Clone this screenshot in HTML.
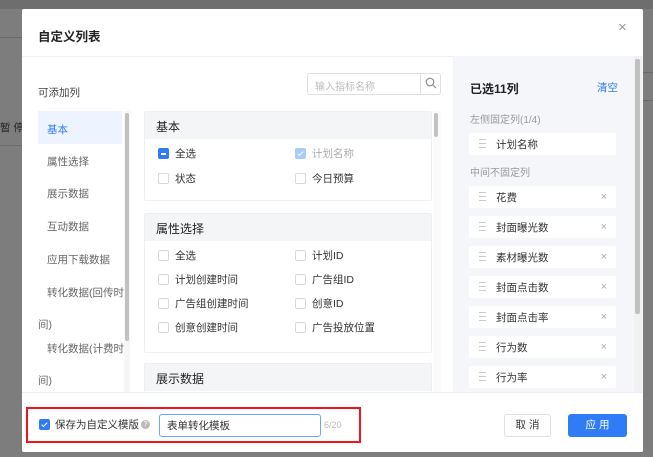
<!DOCTYPE html>
<html><head><meta charset="utf-8"><style>
*{box-sizing:border-box;margin:0;padding:0}
body{width:653px;height:457px;overflow:hidden;background:#7d7d7d;font-family:"Liberation Sans","Noto Sans CJK SC",sans-serif;position:relative;font-size:11px;color:#333}
.a{position:absolute;white-space:nowrap}
.modal{position:absolute;left:22px;top:9px;width:621px;height:443px;background:#fff;border-radius:2px;overflow:hidden}
.cb{position:absolute;width:11px;height:11px;border:1px solid #d6d9de;border-radius:2px;background:#fff}
.lab{position:absolute;font-size:10.5px;color:#333}
.sec{position:absolute;left:122px;width:288px;border:1px solid #eceef1;border-radius:2px;background:#fff}
.sh{height:27px;background:#f4f5f7;font-size:12px;color:#222;padding:6px 11px}
.row{position:absolute;left:447px;width:147px;height:22px;background:#fff;border-radius:2px}
.row .h{position:absolute;left:10px;top:6px;width:7px;height:9px;border-top:1px solid #ccc;border-bottom:1px solid #ccc}
.row .h:after{content:"";position:absolute;left:0;top:3px;width:7px;border-top:1px solid #ccc}
.row .t{position:absolute;left:27px;top:4px;font-size:10.5px;color:#333}
.row .x{position:absolute;right:9px;top:5px;font-size:11px;line-height:12px;color:#aaa}
.nav{position:absolute;left:25px;font-size:10.5px;color:#666}
</style></head><body>
<div class="a" style="left:0;top:0;width:653px;height:9px;background:#6e6e6e"></div>
<div class="a" style="left:0;top:37px;width:22px;border-top:1px solid #6a6a6a"></div>
<div class="a" style="left:0;top:120px;font-size:10.5px;color:#222">暂 停</div>
<div class="a" style="left:0;top:145px;width:22px;border-top:1px solid #6a6a6a"></div>
<div class="a" style="left:643px;top:72px;width:10px;border-top:1px solid #6a6a6a"></div>
<div class="a" style="left:643px;top:100px;width:10px;border-top:1px solid #6a6a6a"></div>

<div class="modal">
 <div class="a" style="left:16px;top:17px;font-size:12.5px;color:#222;font-weight:bold">自定义列表</div>
 <div class="a" style="left:596px;top:10px;font-size:15px;color:#999">×</div>
 <div class="a" style="left:0;top:47px;width:621px;border-top:1px solid #eef0f2"></div>

 <div class="a" style="left:16px;top:76px;font-size:10.5px;color:#444">可添加列</div>
 <div class="a" style="left:285px;top:64px;width:134px;height:22px;border:1px solid #dcdfe4;border-radius:3px"></div>
 <div class="a" style="left:293px;top:69px;font-size:10px;color:#bbb">输入指标名称</div>
 <div class="a" style="left:398px;top:64px;width:1px;height:22px;background:#dcdfe4"></div>
 <svg class="a" style="left:403px;top:68px" width="12" height="12" viewBox="0 0 12 12"><circle cx="5" cy="5" r="3.8" fill="none" stroke="#888" stroke-width="1.1"/><path d="M8 8l3 3" stroke="#888" stroke-width="1.1"/></svg>

 <div class="a" style="left:16px;top:102px;width:84px;height:33px;background:#edf4ff"></div>
 <div class="nav" style="top:113px;color:#2f7cf6">基本</div>
 <div class="nav" style="top:145px">属性选择</div>
 <div class="nav" style="top:177px">展示数据</div>
 <div class="nav" style="top:210px">互动数据</div>
 <div class="nav" style="top:243px">应用下载数据</div>
 <div class="nav" style="top:276px">转化数据(回传时</div>
 <div class="nav" style="top:308px;left:16px">间)</div>
 <div class="nav" style="top:332px">转化数据(计费时</div>
 <div class="nav" style="top:364px;left:16px">间)</div>
 <div class="a" style="left:102px;top:102px;width:6px;height:290px;background:#f6f6f6"></div>
 <div class="a" style="left:103px;top:104px;width:4px;height:228px;background:#c1c1c1;border-radius:2px"></div>

 <div class="sec" style="top:102px;height:90px"><div class="sh">基本</div></div>
 <div class="cb" style="left:136px;top:139px;background:#2f7cf6;border-color:#2f7cf6"><div style="position:absolute;left:2px;top:4px;width:5px;height:1.5px;background:#fff"></div></div>
 <div class="lab" style="left:153px;top:137px">全选</div>
 <div class="cb" style="left:273px;top:139px;background:#a9cbf7;border-color:#a9cbf7"><div style="position:absolute;left:3px;top:1px;width:3px;height:6px;border:solid #fff;border-width:0 1.5px 1.5px 0;transform:rotate(45deg)"></div></div>
 <div class="lab" style="left:290px;top:137px;color:#aaa">计划名称</div>
 <div class="cb" style="left:136px;top:164px"></div><div class="lab" style="left:153px;top:162px">状态</div>
 <div class="cb" style="left:273px;top:164px"></div><div class="lab" style="left:290px;top:162px">今日预算</div>

 <div class="sec" style="top:204px;height:140px"><div class="sh">属性选择</div></div>
 <div class="cb" style="left:136px;top:241px"></div><div class="lab" style="left:153px;top:239px">全选</div>
 <div class="cb" style="left:273px;top:241px"></div><div class="lab" style="left:290px;top:239px">计划ID</div>
 <div class="cb" style="left:136px;top:265px"></div><div class="lab" style="left:153px;top:263px">计划创建时间</div>
 <div class="cb" style="left:273px;top:265px"></div><div class="lab" style="left:290px;top:263px">广告组ID</div>
 <div class="cb" style="left:136px;top:289px"></div><div class="lab" style="left:153px;top:287px">广告组创建时间</div>
 <div class="cb" style="left:273px;top:289px"></div><div class="lab" style="left:290px;top:287px">创意ID</div>
 <div class="cb" style="left:136px;top:313px"></div><div class="lab" style="left:153px;top:311px">创意创建时间</div>
 <div class="cb" style="left:273px;top:313px"></div><div class="lab" style="left:290px;top:311px">广告投放位置</div>

 <div class="sec" style="top:354px;height:40px"><div class="sh">展示数据</div></div>
 <div class="a" style="left:411px;top:102px;width:8px;height:290px;background:#fafafa"></div>
 <div class="a" style="left:412px;top:104px;width:4px;height:24px;background:#c1c1c1;border-radius:2px"></div>

 <div class="a" style="left:431px;top:47px;width:190px;height:336px;background:#f4f6f9"></div>
 <div class="a" style="left:448px;top:71px;font-size:12px;font-weight:bold;color:#222">已选11列</div>
 <div class="a" style="left:575px;top:71px;font-size:10.5px;color:#2f7cf6">清空</div>
 <div class="a" style="left:448px;top:102px;font-size:10px;color:#999">左侧固定列(1/4)</div>
 <div class="row" style="top:124px"><div class="h"></div><div class="t">计划名称</div></div>
 <div class="a" style="left:448px;top:155px;font-size:10px;color:#999">中间不固定列</div>
 <div class="row" style="top:177px"><div class="h"></div><div class="t">花费</div><div class="x">×</div></div>
 <div class="row" style="top:207px"><div class="h"></div><div class="t">封面曝光数</div><div class="x">×</div></div>
 <div class="row" style="top:237px"><div class="h"></div><div class="t">素材曝光数</div><div class="x">×</div></div>
 <div class="row" style="top:267px"><div class="h"></div><div class="t">封面点击数</div><div class="x">×</div></div>
 <div class="row" style="top:297px"><div class="h"></div><div class="t">封面点击率</div><div class="x">×</div></div>
 <div class="row" style="top:327px"><div class="h"></div><div class="t">行为数</div><div class="x">×</div></div>
 <div class="row" style="top:357px"><div class="h"></div><div class="t">行为率</div><div class="x">×</div></div>
 <div class="a" style="left:612px;top:47px;width:8px;height:336px;background:#f1f1f1"></div>
 <div class="a" style="left:613px;top:50px;width:5px;height:255px;background:#c1c1c1;border-radius:2px"></div>

 <div class="a" style="left:0;top:383px;width:621px;height:60px;background:#fff;border-top:1px solid #eee"></div>
 <div class="a" style="left:4px;top:398px;width:335px;height:36px;border:2px solid #f0141e"></div>
 <div class="cb" style="left:17px;top:410px;background:#2f7cf6;border-color:#2f7cf6"><div style="position:absolute;left:3px;top:1px;width:3px;height:6px;border:solid #fff;border-width:0 1.5px 1.5px 0;transform:rotate(45deg)"></div></div>
 <div class="a" style="left:33px;top:408px;font-size:10.5px;color:#333">保存为自定义模版</div>
 <div class="a" style="left:119px;top:411px;width:9px;height:9px;border-radius:50%;background:#bbb;color:#fff;font-size:7px;text-align:center;line-height:9px">?</div>
 <div class="a" style="left:137px;top:405px;width:162px;height:23px;border:1px solid #6fa6f5;border-radius:3px"></div>
 <div class="a" style="left:145px;top:409px;font-size:10.5px;color:#333">表单转化模板</div>
 <div class="a" style="left:302px;top:411px;font-size:9px;color:#bbb">6/20</div>
 <div class="a" style="left:482px;top:405px;width:47px;height:23px;border:1px solid #dcdfe4;border-radius:3px;font-size:10.5px;text-align:center;line-height:21px;color:#333">取 消</div>
 <div class="a" style="left:546px;top:405px;width:59px;height:23px;background:#2f7cf6;border-radius:3px;font-size:10.5px;text-align:center;line-height:23px;color:#fff">应 用</div>
</div>
</body></html>
